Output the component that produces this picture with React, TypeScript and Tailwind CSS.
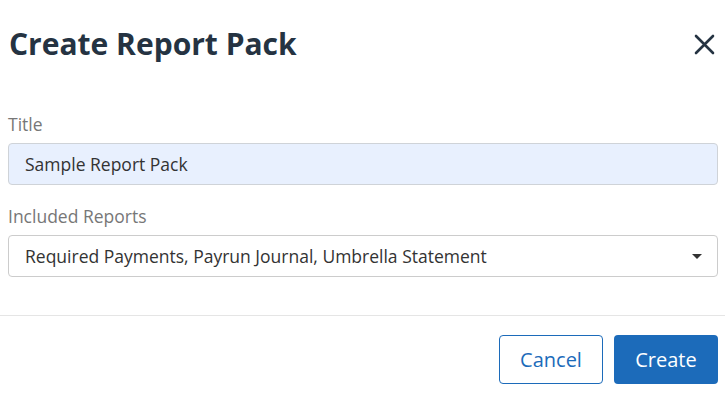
import React from 'react'

const font = { fontFamily: '"Open Sans", "Noto Sans", sans-serif' }

export default function App() {
  return (
    <div className="h-[396px] w-[725px] bg-white text-[#333]" style={font}>
      <div className="flex items-center justify-between pl-[9px] pr-[10px] pt-[24px]">
        <h2 className="text-[30px] font-bold leading-[40px] text-[#253342]">Create Report Pack</h2>
        <button aria-label="Close" className="text-[#253342]">
          <svg className="h-[21px] w-[21px]" viewBox="0 0 21 21" fill="none" stroke="currentColor">
            <path strokeWidth={2.6} strokeLinecap="round" d="M2 2L19 19M19 2L2 19" />
          </svg>
        </button>
      </div>

      <div className="flex flex-col pl-[8px] pr-[7px] pt-[48px]">
        <label className="text-[17.5px] leading-[24px] text-[#777]">Title</label>
        <div className="mt-[7px] flex h-[42px] items-center rounded-[4px] border border-[#cfd3d8] bg-[#e8f0fe] px-[16px] text-[17.5px] text-[#333]">
          Sample Report Pack
        </div>

        <label className="mt-[19px] text-[17.5px] leading-[24px] text-[#777]">Included Reports</label>
        <div className="mt-[7px] flex h-[42px] items-center justify-between rounded-[4px] border border-[#ccc] bg-white pl-[16px] pr-[15px] text-[17.5px] text-[#333]">
          <span>Required Payments, Payrun Journal, Umbrella Statement</span>
          <svg className="h-[5px] w-[10px]" viewBox="0 0 10 5" fill="#333">
            <path d="M0 0H10L5 5Z" />
          </svg>
        </div>
      </div>

      <div className="mt-[38px] border-t border-[#e5e5e5]" />

      <div className="flex justify-end gap-[11px] pr-[7px] pt-[19px]">
        <button className="h-[49px] w-[104px] rounded-[4px] border border-[#1c6bba] bg-white text-[20px] text-[#1c6bba]">
          Cancel
        </button>
        <button className="h-[49px] w-[104px] rounded-[4px] bg-[#1c6bba] text-[20px] text-white">
          Create
        </button>
      </div>
    </div>
  )
}
